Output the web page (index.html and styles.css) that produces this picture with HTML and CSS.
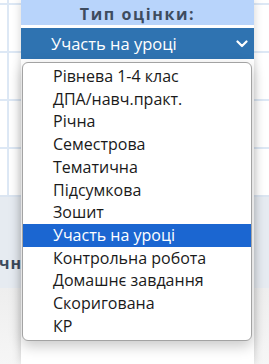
FILE: index.html
```html
<!DOCTYPE html>
<html lang="uk">
  <head>
    <meta charset="UTF-8" />
    <meta name="viewport" content="width=device-width, initial-scale=1.0" />
    <title>Тип оцінки</title>
    <link rel="stylesheet" href="styles.css">
  </head>
  <body>
    <!-- сторінка під модальним вікном -->
    <div class="sheet">
      <div class="grid"></div>
      <div class="band"><span>чн</span></div>
      <div class="rest"></div>
    </div>

    <!-- модальне вікно -->
    <div class="modal">
      <div class="modal-title">Тип оцінки:</div>
      <div class="select">
        <span>Участь на уроці</span>
        <svg class="chevron" width="12" height="8" viewBox="0 0 12 8">
          <path d="M1.5 1.5 L6 6 L10.5 1.5" fill="none" stroke="#fff" stroke-width="2.2" stroke-linecap="round" stroke-linejoin="round" />
        </svg>
      </div>
    </div>

    <ul class="options">
      <li>Рівнева 1-4 клас</li>
      <li>ДПА/навч.практ.</li>
      <li>Річна</li>
      <li>Семестрова</li>
      <li>Тематична</li>
      <li>Підсумкова</li>
      <li>Зошит</li>
      <li class="active">Участь на уроці</li>
      <li>Контрольна робота</li>
      <li>Домашнє завдання</li>
      <li>Скоригована</li>
      <li>КР</li>
    </ul>
  </body>
</html>
```

FILE: styles.css
```css
* {
  margin: 0;
  padding: 0;
  box-sizing: border-box;
}
ul {
  list-style: none;
}
body {
  width: 269px;
  height: 364px;
  overflow: hidden;
  position: relative;
  background-color: #fff;
  font-family: "Open Sans", "Noto Sans", sans-serif;
}

/* sheet */

.grid {
  height: 195px;
  background-color: #fff;
  background-image:
    linear-gradient(90deg, transparent 7px, #dde8f5 7px, #dde8f5 9px, transparent 9px),
    linear-gradient(#dde8f5 2px, transparent 2px);
  background-size: 100% 100%, 100% 48px;
  background-position: 0 0, 0 3px;
  background-repeat: no-repeat, repeat-y;
}

.band {
  height: 93px;
  padding-top: 56px;
  border-top: 2px solid #dbe5f1;
  background-color: #e6ebf1;
  font-size: 16px;
  font-weight: 700;
  line-height: 20px;
  color: #3b4a5c;
  letter-spacing: 1px;
}
.band span {
  margin-left: -1px;
}

.rest {
  height: 76px;
  background: linear-gradient(#eeeeee, #f6f6f6);
}

/* sheet end */

/* modal */

.modal {
  position: absolute;
  left: 21px;
  top: 0;
  width: 233px;
  height: 364px;
  background-color: #fff;
  box-shadow: 0 0 9px rgba(0, 0, 0, 0.18);
}

.modal-title {
  height: 28px;
  line-height: 28px;
  text-align: center;
  background-color: #b8d4fb;
  color: #3e4c5f;
  font-size: 16px;
  font-weight: 700;
  letter-spacing: 1.6px;
  border-bottom: 3px solid #fff;
}

.select {
  display: flex;
  align-items: center;
  justify-content: space-between;
  height: 31px;
  padding: 0 6px 0 30px;
  background-color: #2f73b1;
  color: #fff;
  font-size: 16.5px;
}
.select span {
  margin-top: -1px;
}
.chevron {
  margin-top: 1px;
}

/* modal end */

/* options */

.options {
  position: absolute;
  left: 22px;
  top: 62px;
  width: 230px;
  padding: 2px 0 3px;
  border: 1px solid #a3a3a3;
  border-radius: 6px;
  background-color: #fff;
  box-shadow: 0 5px 14px rgba(0, 0, 0, 0.22);
  font-size: 16px;
  line-height: 22.7px;
  color: #1a1a1a;
}
.options li {
  padding-left: 30px;
  white-space: nowrap;
}
.options li.active {
  background-color: #1b66d1;
  color: #fff;
}

/* options end */
```
